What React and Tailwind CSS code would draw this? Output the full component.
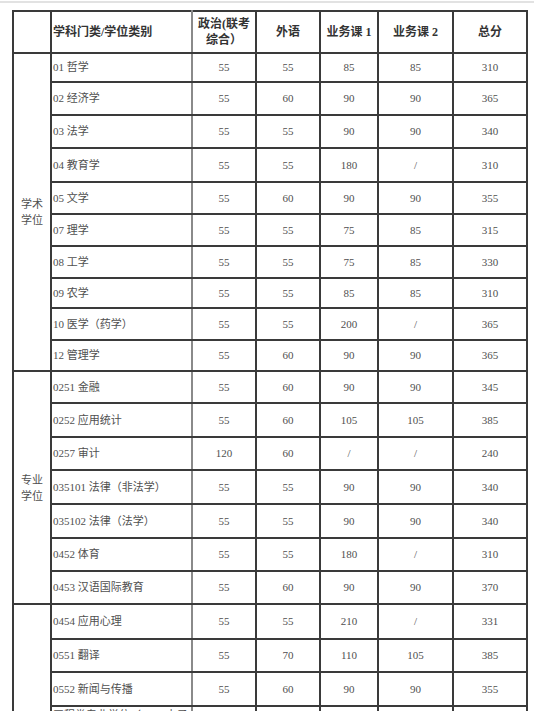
import React from 'react';

const groups = [
  {
    label: ['学术', '学位'],
    rows: [
      ['01 哲学', '55', '55', '85', '85', '310', 29],
      ['02 经济学', '55', '60', '90', '90', '365', 33],
      ['03 法学', '55', '55', '90', '90', '340', 33],
      ['04 教育学', '55', '55', '180', '/', '310', 34],
      ['05 文学', '55', '60', '90', '90', '355', 32],
      ['07 理学', '55', '55', '75', '85', '315', 32],
      ['08 工学', '55', '55', '75', '85', '330', 32],
      ['09 农学', '55', '55', '85', '85', '310', 30],
      ['10 医学（药学）', '55', '55', '200', '/', '365', 32],
      ['12 管理学', '55', '60', '90', '90', '365', 31],
    ],
  },
  {
    label: ['专业', '学位'],
    rows: [
      ['0251 金融', '55', '60', '90', '90', '345', 32],
      ['0252 应用统计', '55', '60', '105', '105', '385', 34],
      ['0257 审计', '120', '60', '/', '/', '240', 33],
      ['035101 法律（非法学）', '55', '55', '90', '90', '340', 34],
      ['035102 法律（法学）', '55', '55', '90', '90', '340', 34],
      ['0452 体育', '55', '55', '180', '/', '310', 33],
      ['0453 汉语国际教育', '55', '60', '90', '90', '370', 33],
    ],
  },
  {
    label: [],
    rows: [
      ['0454 应用心理', '55', '55', '210', '/', '331', 35],
      ['0551 翻译', '55', '70', '110', '105', '385', 33],
      ['0552 新闻与传播', '55', '60', '90', '90', '355', 34],
      ['工程类专业学位（0854 电子信息）', '55', '60', '90', '90', '355', 60, true],
    ],
  },
];

const cell = 'border-2 border-[#3a3a3a] p-0';
const num = `${cell} text-center text-[11px] text-[#505050]`;

export default function App() {
  return (
    <div className="w-[534px] h-[711px] overflow-hidden bg-white" style={{ fontFamily: '"Liberation Serif", "Noto Sans CJK SC", serif' }}>
      <div className="h-[2px] mt-[1px] bg-[#e2e2e2]" />
      <table className="table-fixed border-collapse ml-[12px] mt-[7px] w-[514px]">
        <colgroup>
          <col className="w-[38px]" />
          <col className="w-[141px]" />
          <col className="w-[64px]" />
          <col className="w-[64px]" />
          <col className="w-[58px]" />
          <col className="w-[75px]" />
          <col className="w-[74px]" />
        </colgroup>
        <thead>
          <tr className="h-[42px] text-[12px] font-bold text-[#333]">
            <th className={cell}></th>
            <th className={`${cell} border-r-[#8a8a8a] text-left pl-[1px] font-bold`}>学科门类/学位类别</th>
            <th className={`${cell} leading-[16px] font-bold`}>政治(联考<br />综合）</th>
            <th className={`${cell} font-bold`}>外语</th>
            <th className={`${cell} font-bold`}>业务课 1</th>
            <th className={`${cell} font-bold`}>业务课 2</th>
            <th className={`${cell} font-bold`}>总分</th>
          </tr>
        </thead>
        <tbody>
          {groups.map((g, gi) =>
            g.rows.map((r, ri) => (
              <tr key={`${gi}-${ri}`} style={{ height: r[6] }}>
                {ri === 0 && (
                  <td rowSpan={g.rows.length} className={`${cell} text-center align-middle text-[11px] leading-[16px] text-[#505050]`}>
                    {g.label.map((l) => (
                      <div key={l}>{l}</div>
                    ))}
                  </td>
                )}
                <td
                  className={`${cell} border-r-[#8a8a8a] text-left pl-[1px] text-[11px] text-[#505050] ${
                    r[7] ? 'align-top leading-[16px]' : 'whitespace-nowrap overflow-hidden'
                  }`}
                >
                  {r[0]}
                </td>
                <td className={num}>{r[1]}</td>
                <td className={num}>{r[2]}</td>
                <td className={num}>{r[3]}</td>
                <td className={num}>{r[4]}</td>
                <td className={num}>{r[5]}</td>
              </tr>
            ))
          )}
        </tbody>
      </table>
    </div>
  );
}
